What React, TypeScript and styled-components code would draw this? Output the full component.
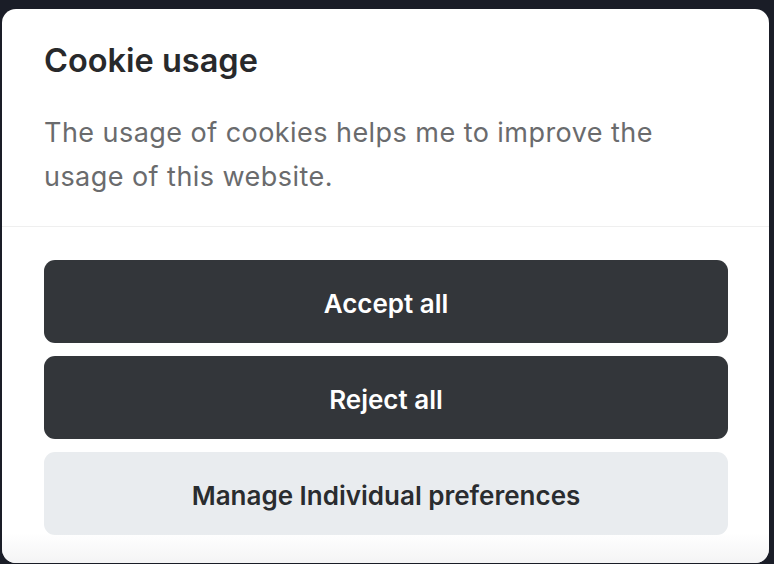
import styled, { createGlobalStyle } from 'styled-components'

const GlobalStyle = createGlobalStyle`
  html, body {
    margin: 0;
    padding: 0;
    background: #1a1d27;
    font-family: Inter, "Noto Sans", sans-serif;
    -webkit-font-smoothing: antialiased;
  }
`

const Page = styled.div`
  width: 774px;
  height: 564px;
  padding: 9px 5px 1px 2px;
  box-sizing: border-box;
  overflow: hidden;
`

const Dialog = styled.section`
  position: relative;
  height: 100%;
  background: #ffffff;
  border-radius: 14px;
  overflow: hidden;
  display: flex;
  flex-direction: column;

  &::after {
    content: '';
    position: absolute;
    left: 0;
    right: 0;
    bottom: 0;
    height: 30px;
    background: linear-gradient(to bottom, rgba(245, 245, 246, 0), #f4f4f5);
    pointer-events: none;
  }
`

const Header = styled.header`
  padding: 32px 42px 0;
  height: 218px;
  box-sizing: border-box;
  border-bottom: 1px solid #efefef;
`

const Title = styled.h2`
  margin: 0;
  font-size: 32.5px;
  line-height: 40px;
  font-weight: 600;
  color: #28292b;
`

const Text = styled.p`
  margin: 30px 0 0;
  max-width: 650px;
  font-size: 27px;
  line-height: 44px;
  letter-spacing: 0.45px;
  font-weight: 400;
  color: #6a6b6d;
`

const Actions = styled.div`
  padding: 33px 41px 0 42px;
  display: flex;
  flex-direction: column;
  gap: 13px;
`

const Button = styled.button<{ $variant: 'dark' | 'light' }>`
  height: 83px;
  padding: 3px 0 0;
  border: none;
  border-radius: 11px;
  font-family: inherit;
  font-size: 26px;
  font-weight: 600;
  cursor: pointer;
  background: ${({ $variant }) => ($variant === 'dark' ? '#33363a' : '#e9ecef')};
  color: ${({ $variant }) => ($variant === 'dark' ? '#ffffff' : '#2a2c2f')};
`

export default function App() {
  return (
    <>
      <GlobalStyle />
      <Page>
        <Dialog>
          <Header>
            <Title>Cookie usage</Title>
            <Text>
              The usage of cookies helps me to improve the usage of this website.
            </Text>
          </Header>
          <Actions>
            <Button $variant="dark">Accept all</Button>
            <Button $variant="dark">Reject all</Button>
            <Button $variant="light">Manage Individual preferences</Button>
          </Actions>
        </Dialog>
      </Page>
    </>
  )
}
